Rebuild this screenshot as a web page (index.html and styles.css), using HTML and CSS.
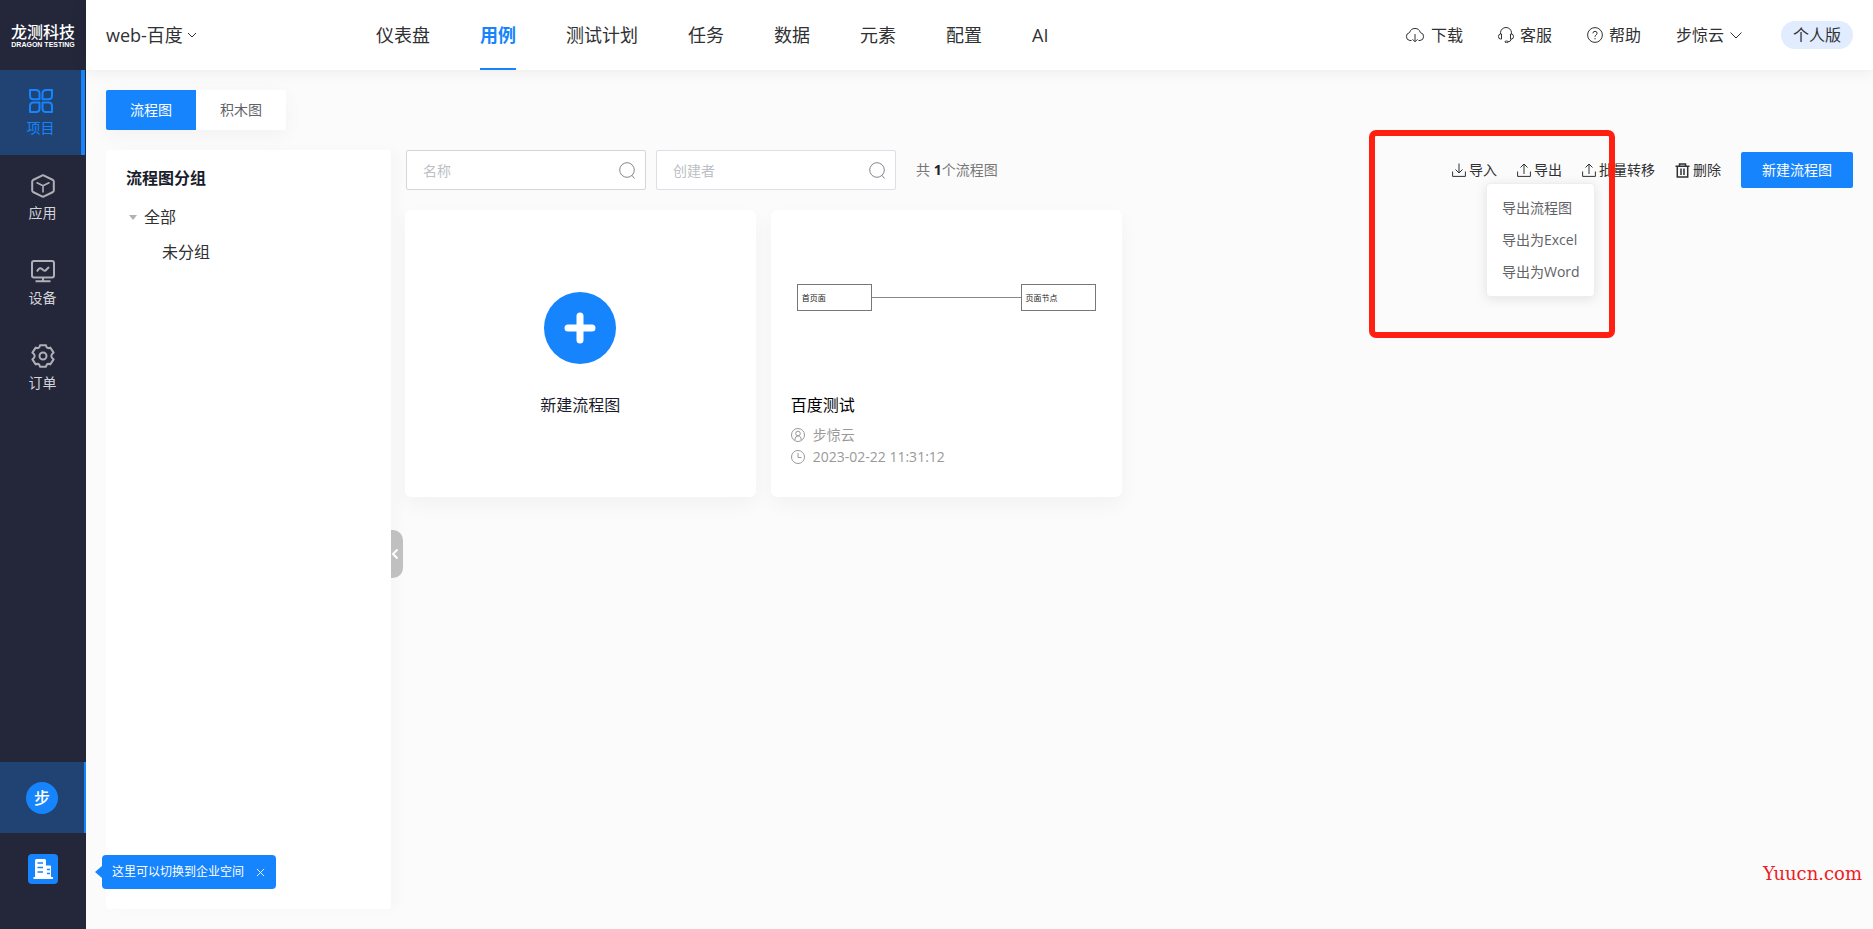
FILE: index.html
```html
<!DOCTYPE html>
<html lang="zh-CN">
<head>
<meta charset="utf-8">
<title>用例 - 流程图</title>
<link rel="stylesheet" href="styles.css">
</head>
<body>
<div class="app">
  <aside class="sidebar">
    <a class="logo" href="#"><span class="logo-cn">龙测科技</span><span class="logo-en">DRAGON TESTING</span></a>
    <nav class="side-nav">
      <a class="side-item active" href="#">
        <svg class="side-icon" viewBox="0 0 24 24"><path d="M1 1h6q3.500 0 3.500 3.500V10.200H4.500Q1 10.200 1 6.700zM23 1h-6q-3.500 0-3.500 3.500V10.200H19.500Q23 10.200 23 6.700zM1 23V17Q1 13.500 4.500 13.500H10.500V19.500Q10.500 23 7 23zM23 23V17Q23 13.500 19.500 13.500H13.500V19.500Q13.500 23 17 23z"/></svg>
        <span>项目</span></a>
      <a class="side-item" href="#">
        <svg class="side-icon" viewBox="0 0 24 24"><path d="M12 1.200 22 6Q22.800 6.500 22.800 7.500V16.500Q22.800 17.500 22 18L12 22.800 2 18Q1.200 17.500 1.200 16.500V7.500Q1.200 6.500 2 6z"/><path stroke-width="1.600" d="M5.500 8.500 12 11.800 18.500 8.500M12 11.800V18.500"/></svg>
        <span>应用</span></a>
      <a class="side-item" href="#">
        <svg class="side-icon" viewBox="0 0 24 24"><path d="M3 2H21Q23 2 23 4V16.500Q23 18.500 21 18.500H3Q1 18.500 1 16.500V4Q1 2 3 2zM12 18.500v3.500M4.500 22.300H19.500M6 12.500Q8.500 7.500 11 10T14.500 11.500L18 8"/></svg>
        <span>设备</span></a>
      <a class="side-item" href="#">
        <svg class="side-icon" viewBox="0 0 24 24"><circle cx="12" cy="12" r="3.500"/><path d="M9 1.200H15L15.600 3.200Q17 4.800 19.300 3.600L22.600 8.600Q20.300 10 20.300 12T22.600 15.400L19.300 20.400Q17 19.200 15.600 20.800L15 22.800H9L8.400 20.800Q7 19.200 4.700 20.400L1.400 15.400Q3.700 14 3.700 12T1.400 8.600L4.700 3.600Q7 4.800 8.400 3.200z"/></svg>
        <span>订单</span></a>
    </nav>
    <div class="spaces">
      <a class="space-user" href="#"><span class="avatar">步</span></a>
      <div class="space-org">
        <button class="org-btn" aria-label="企业空间"><svg viewBox="0 0 30 30"><path fill="#fff" d="M6 23H7V6.500Q7 5 8.500 5H16.500Q18 5 18 6.500V11.500H22Q23 11.500 23 12.500V23H25V25H5.500V23z"/><path stroke="#1684fc" stroke-width="1.500" d="M9.500 9H15M9.500 13.500H15M9.500 18H15M19 15.500H22M19 19.500H22"/></svg></button>
        <div class="tip"><span>这里可以切换到企业空间</span><button class="tip-close" aria-label="关闭"><svg viewBox="0 0 10 10"><path d="M1 1 9 9M9 1 1 9"/></svg></button></div>
      </div>
    </div>
  </aside>

  <div class="main">
    <header class="header">
      <button class="project">web-百度<svg class="chev-s" viewBox="0 0 10 10"><path d="M1 3 5 7 9 3"/></svg></button>
      <nav class="top-nav">
        <a href="#">仪表盘</a><a class="active" href="#">用例</a><a href="#">测试计划</a><a href="#">任务</a><a href="#">数据</a><a href="#">元素</a><a href="#">配置</a><a href="#">AI</a>
      </nav>
      <div class="header-right">
        <a href="#"><svg class="cloud" viewBox="0 0 20 18"><path d="M6.500 14.500H5A4 4 0 0 1 4.600 6.600 5.600 5.600 0 0 1 15.400 6.600 4 4 0 0 1 15 14.500H13.500M10 8V15.500M7.500 13.300 10 15.800 12.500 13.300"/></svg>下载</a>
        <a href="#"><svg class="icon16" viewBox="0 0 16 16"><path d="M2.500 7V5.800A5.500 5.300 0 0 1 13.500 5.800V7M3.500 7V12H2.500Q.5 12 .5 9.500T2.500 7zM12.500 7V12H13.500Q15.500 12 15.500 9.500T13.500 7zM13.300 12Q13 14.800 9.500 15"/><ellipse cx="8.500" cy="14.800" rx="1.600" ry=".8"/></svg>客服</a>
        <a href="#"><svg class="icon16" viewBox="0 0 16 16"><circle cx="8" cy="8" r="7.400"/><path d="M5.900 6.300Q6 4.300 8 4.300T10.100 6.200Q10.100 7.200 9 7.900T8 9.800M8 11V12.300"/></svg>帮助</a>
        <button class="user">步惊云<svg class="chev" viewBox="0 0 14 14"><path d="M1.500 4.500 7 10 12.500 4.500"/></svg></button>
        <span class="pill">个人版</span>
      </div>
    </header>

    <main class="content">
      <div class="tabs"><button class="tab active">流程图</button><button class="tab">积木图</button></div>
      <div class="columns">
        <section class="groups">
          <h2>流程图分组</h2>
          <ul class="tree">
            <li><a href="#" class="root"><i class="caret"></i>全部</a></li>
            <li><a href="#" class="leaf">未分组</a></li>
          </ul>
          <button class="collapse" aria-label="收起"><svg viewBox="0 0 8 12"><path d="M6.500 1.500 2 6 6.500 10.500"/></svg></button>
        </section>
        <section class="flows">
          <div class="toolbar">
            <label class="search"><input type="text" placeholder="名称" aria-label="名称"><svg viewBox="0 0 17 17"><circle cx="8" cy="8" r="7.300"/><path d="M12.800 13.200 15.500 16.500"/></svg></label>
            <label class="search plain"><input type="text" placeholder="创建者" aria-label="创建者"><svg viewBox="0 0 17 17"><circle cx="8" cy="8" r="7.300"/><path d="M12.800 13.200 15.500 16.500"/></svg></label>
            <p class="count">共 <b>1</b>个流程图</p>
            <div class="actions">
              <button><svg class="icon14" viewBox="0 0 14 14"><path d="M.6 8.500V13.400H13.400V8.500M7 .5V9.500M3.500 6.500 7 10 10.500 6.500"/></svg>导入</button>
              <div class="export">
                <button><svg class="icon14" viewBox="0 0 14 14"><path d="M.6 8.500V13.400H13.400V8.500M7 11V1.200M3.500 4.500 7 1 10.500 4.500"/></svg>导出</button>
                <ul class="menu">
                  <li><a href="#">导出流程图</a></li><li><a href="#">导出为Excel</a></li><li><a href="#">导出为Word</a></li>
                </ul>
                <div class="highlight"></div>
              </div>
              <button><svg class="icon14" viewBox="0 0 14 14"><path d="M.6 8.500V13.400H13.400V8.500M7 11V1.200M3.500 4.500 7 1 10.500 4.500"/></svg>批量转移</button>
              <button><svg class="trash" viewBox="0 0 15 15"><path d="M.5 3.200H14.500M4.500 3V.9H10.500V3M2.300 3.500V14H12.700V3.500M6 5.500V12M9 5.500V12"/></svg>删除</button>
              <button class="primary">新建流程图</button>
            </div>
          </div>
          <div class="cards">
            <button class="card create">
              <span class="plus"><svg viewBox="0 0 40 40"><path d="M20 8V32M8 20H32"/></svg></span>
              <span>新建流程图</span>
            </button>
            <article class="card flow">
              <div class="preview"><span class="node">首页面</span><span class="edge"></span><span class="node">页面节点</span></div>
              <h3>百度测试</h3>
              <p><svg class="icon14" viewBox="0 0 14 14"><circle cx="7" cy="7" r="6.500"/><circle cx="7" cy="5.500" r="2.300"/><path d="M3.800 12Q4 8 7 7.900T10.200 12"/></svg>步惊云</p>
              <p><svg class="icon14" viewBox="0 0 14 14"><circle cx="7" cy="7" r="6.500"/><path d="M7 3V7.500H10.500"/></svg>2023-02-22 11:31:12</p>
            </article>
          </div>
        </section>
      </div>
    </main>
  </div>
  <div class="watermark">Yuucn.com</div>
</div>
</body>
</html>
```
FILE: styles.css
```css
* { box-sizing: border-box; }
body { margin: 0; font: 14px/20px "Open Sans", "Noto Sans CJK SC", sans-serif; color: #303133; background: #fbfbfb; }
a { color: inherit; text-decoration: none; }
button { font: inherit; color: inherit; background: none; border: 0; padding: 0; cursor: pointer; }
h2, h3, p, ul { margin: 0; padding: 0; }
ul { list-style: none; }
svg { display: block; flex: none; fill: none; stroke: currentColor; }

.app { display: flex; min-height: 100vh; position: relative; }

.sidebar { width: 86px; flex: none; background: #24263a; color: #d3d4d8; display: flex; flex-direction: column; }
.logo { height: 70px; display: flex; flex-direction: column; align-items: center; justify-content: center; color: #fff; padding-top: 2px; }
.logo-cn { font-size: 16px; line-height: 18px; font-weight: 500; }
.logo-en { font-family: "Liberation Sans", sans-serif; font-size: 7px; line-height: 8px; font-weight: 700; }
.side-item { height: 85px; width: 85px; padding-top: 2px; display: flex; flex-direction: column; align-items: center; justify-content: center; gap: 5px; }
.side-icon { width: 24px; height: 24px; stroke-width: 2; color: #afb0b6; stroke-linejoin: round; }
.side-item.active { background: #204373; border-right: 4px solid #1684fc; color: #1684fc; }
.side-item.active .side-icon { color: #1684fc; }
.spaces { margin-top: auto; }
.space-user { height: 71px; background: #204373; border-right: 2px solid #1684fc; display: flex; align-items: center; justify-content: center; }
.avatar { width: 32px; height: 32px; border-radius: 50%; background: #1684fc; color: #fff; font-size: 16px; line-height: 32px; text-align: center; font-weight: 500; }
.space-org { height: 96px; padding: 21px 28px; position: relative; }
.org-btn { width: 30px; height: 30px; display: block; background: #1684fc; border-radius: 4px; }
.org-btn svg { stroke: none; }
.tip { position: absolute; left: 102px; top: 22px; height: 34px; display: flex; align-items: center; gap: 12px; padding: 0 11px 0 10px; border-radius: 4px; background: #1684fc; color: #fff; font-size: 12px; white-space: nowrap; z-index: 3; }
.tip::before { content: ""; position: absolute; left: -7px; top: 11px; border: 6px solid transparent; border-left: 0; border-right: 7px solid #1684fc; }
.tip-close svg { width: 9px; height: 9px; }

.main { flex: 1; min-width: 0; display: flex; flex-direction: column; }
.header { height: 70px; background: #fff; box-shadow: 0 0 16px rgba(0, 0, 0, .08); display: flex; align-items: center; padding: 0 20px; position: relative; }
.project { font-size: 18px; display: flex; align-items: center; gap: 4px; width: 270px; }
.chev-s { width: 10px; height: 10px; }
.top-nav { display: flex; gap: 50px; font-size: 18px; }
.top-nav a { line-height: 70px; }
.top-nav .active { color: #1684fc; font-weight: 700; box-shadow: inset 0 -2px #1684fc; }
.header-right { margin-left: auto; display: flex; align-items: center; gap: 35px; font-size: 16px; }
.header-right a, .user { display: flex; align-items: center; gap: 6px; }
.cloud { width: 20px; height: 18px; }
.icon16 { width: 16px; height: 16px; }
.icon14 { width: 14px; height: 14px; }
.user { gap: 5px; }
.chev { width: 14px; height: 14px; }
.pill { background: #e1edff; border-radius: 14px; line-height: 28px; padding: 0 12px; margin-left: 3px; }

.content { flex: 1; padding: 20px; display: flex; flex-direction: column; gap: 20px; }
.tabs { display: flex; align-self: flex-start; border-radius: 2px; background: #fff; box-shadow: 0 5px 20px rgba(0, 0, 0, .04); }
.tab { width: 90px; height: 40px; color: #606266; }
.tab.active { background: #1684fc; color: #fff; border-radius: 2px 0 0 2px; }
.columns { flex: 1; display: flex; gap: 14px; }
.groups { width: 285px; flex: none; background: #fff; border-radius: 4px; padding: 18px 20px; position: relative; box-shadow: 8px 0 12px rgba(0, 0, 0, .02); }
.groups h2 { font-size: 16px; line-height: 20px; color: #1a1c2c; }
.tree { padding-top: 12px; font-size: 16px; line-height: 35px; }
.root { display: flex; align-items: center; padding-left: 3px; gap: 7px; }
.caret { border: 4px solid transparent; border-top: 5px solid #b0b2b6; border-bottom: 0; }
.leaf { display: block; padding-left: 36px; }
.collapse { position: absolute; left: 100%; top: 50%; width: 12px; height: 48px; background: #c0c0c0; border-radius: 0 10px 10px 0; color: #fff; display: grid; place-items: center start; }
.collapse svg { width: 8px; height: 12px; stroke-width: 2; }

.flows { flex: 1; min-width: 0; }
.toolbar { display: flex; align-items: center; gap: 10px; height: 40px; padding-left: 1px; }
.search { position: relative; }
.search input { display: block; width: 240px; height: 40px; border: 1px solid #d4d6d9; border-radius: 2px; background: #fff; padding: 0 36px 0 16px; font: inherit; outline: 0; }
.search.plain input { border-color: #dcdfe6; }
.search input::placeholder { color: #bcbfc6; opacity: 1; }
.search svg { position: absolute; right: 10px; top: 12px; width: 17px; height: 17px; color: #84878c; }
.count { margin-left: 10px; color: #777; }
.count b { color: #222; }
.actions { margin-left: auto; display: flex; align-items: center; gap: 20px; }
.actions button { display: flex; align-items: center; gap: 3px; }
.trash { width: 15px; height: 15px; stroke-width: 1.5; }
.export { position: relative; }
.menu { position: absolute; right: -33px; top: 23px; width: 109px; padding: 8px 0; background: #fff; border: 1px solid #ebeef5; border-radius: 4px; box-shadow: 0 2px 12px rgba(0, 0, 0, .1); color: #606266; z-index: 2; }
.menu a { display: block; line-height: 32px; padding: 0 15px; white-space: nowrap; }
.highlight { position: absolute; left: -148px; top: -30px; width: 246px; height: 208px; border: 6px solid #ff2012; border-radius: 7px; pointer-events: none; z-index: 3; }
.actions .primary { background: #1684fc; color: #fff; height: 36px; padding: 0 21px; border-radius: 2px; }

.cards { display: grid; grid-template-columns: repeat(4, 1fr); gap: 15px; margin-top: 20px; }
.card { background: #fff; border-radius: 6px; height: 287px; box-shadow: 0 8px 20px rgba(0, 0, 0, .04); }
.create { display: flex; flex-direction: column; align-items: center; padding-top: 82px; gap: 31px; font-size: 16px; color: #1a1c2c; }
.plus { width: 72px; height: 72px; border-radius: 50%; background: #1684fc; color: #fff; display: grid; place-items: center; }
.plus svg { width: 40px; height: 40px; stroke-width: 7; stroke-linecap: round; }
.flow { padding: 0 20px; color: #999; }
.preview { height: 175px; padding: 0 6px; display: flex; align-items: center; color: #222; font-size: 8px; }
.node { width: 75px; height: 27px; line-height: 25px; border: 1px solid #777; padding-left: 4px; }
.edge { flex: 1; height: 1px; background: #888; }
.flow h3 { font-size: 16px; line-height: 20px; font-weight: 400; color: #000; margin: 10px 0 9px; }
.flow p { display: flex; align-items: center; gap: 8px; line-height: 22px; }
.watermark { position: absolute; right: 11px; bottom: 45px; color: #ee1c25; font: 18px/20px "DejaVu Serif", serif; }
```
